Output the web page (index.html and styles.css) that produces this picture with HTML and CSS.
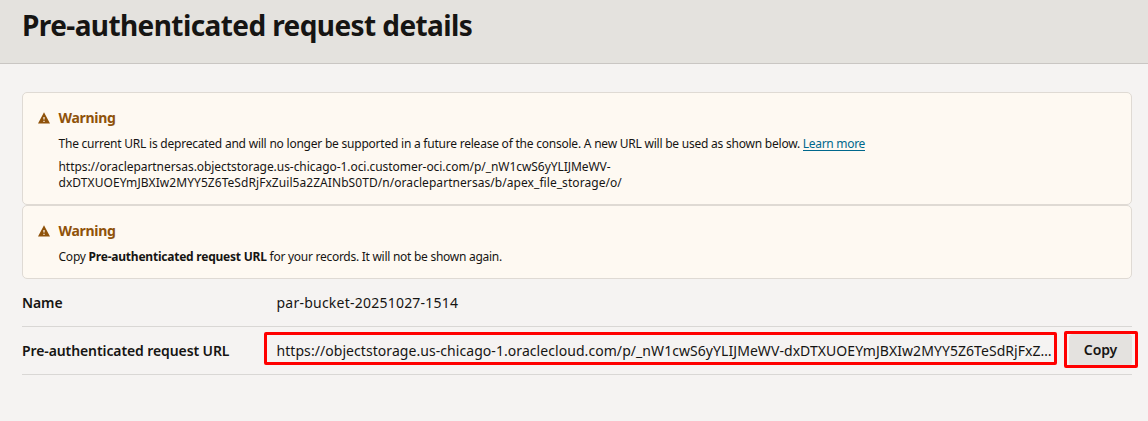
FILE: index.html
```html
<!DOCTYPE html>
<html lang="en">
<head>
<meta charset="utf-8">
<title>Pre-authenticated request details</title>
<link rel="stylesheet" href="styles.css">
</head>
<body>
<header class="header"><h1 class="title">Pre-authenticated request details</h1></header>
<main class="content">
  <section class="alert alert-url">
    <svg class="alert-icon" viewBox="0 0 12 12"><path fill="#8f520a" fill-rule="evenodd" d="M6 .3 12 11.6H0ZM5.4 5v2.6h1.2V5ZM5.4 8.8v1.2h1.2V8.8Z"/></svg>
    <div class="alert-body">
      <h2 class="alert-title">Warning</h2>
      <p class="text">The current URL is deprecated and will no longer be supported in a future release of the console. A new URL will be used as shown below. <a class="link" href="#">Learn more</a></p>
      <p class="text url"><span class="url-host">https://oraclepartnersas.objectstorage.us-chicago-1.oci.customer-oci.com/p/_nW1cwS6yYLIJMeWV-</span><br><span class="url-path">dxDTXUOEYmJBXIw2MYY5Z6TeSdRjFxZuil5a2ZAINbS0TD/n/oraclepartnersas/b/apex_file_storage/o/</span></p>
    </div>
  </section>
  <section class="alert alert-copy">
    <svg class="alert-icon" viewBox="0 0 12 12"><path fill="#8f520a" fill-rule="evenodd" d="M6 .3 12 11.6H0ZM5.4 5v2.6h1.2V5ZM5.4 8.8v1.2h1.2V8.8Z"/></svg>
    <div class="alert-body">
      <h2 class="alert-title">Warning</h2>
      <p class="text">Copy <b>Pre-authenticated request URL</b><span class="note"> for your records. It will not be shown again.</span></p>
    </div>
  </section>
  <dl class="details">
    <div class="row"><dt>Name</dt><dd class="name">par-bucket-20251027-1514</dd></div>
    <div class="row"><dt>Pre-authenticated request URL</dt><dd class="value marked">https://objectstorage.us-chicago-1.oraclecloud.com/p/_nW1cwS6yYLIJMeWV-dxDTXUOEYmJBXIw2MYY5Z6TeSdRjFxZ…</dd><dd class="action marked"><button class="copy">Copy</button></dd></div>
  </dl>
</main>
</body>
</html>
```
FILE: styles.css
```css
* { box-sizing: border-box; }
body { margin: 0; background: #f5f3f2; color: #161513; font-family: "Noto Sans", sans-serif; }
h1, h2, p, dl, dd { margin: 0; }
.header { height: 64px; background: #e4e2de; border-bottom: 1px solid #c9c6c3; padding: 5px 22px 0; }
.title { font-size: 28px; line-height: 40px; font-weight: 700; white-space: nowrap; letter-spacing: -0.59px; }
.content { padding: 28px 16px 0 22px; }
.alert { display: flex; background: #fef9f2; border: 1px solid #dfdad4; border-radius: 5px; padding: 15px; }
.alert-url { height: 113px; }
.alert-copy { height: 74px; }
.alert-icon { width: 12px; height: 12px; flex: none; margin: 4px 8.5px 0 0; }
.alert-title { font-size: 14px; line-height: 20px; font-weight: 700; color: #8f520a; letter-spacing: -0.3px; }
.text { font-size: 12px; line-height: 16px; margin-top: 8px; white-space: nowrap; letter-spacing: -0.225px; }
.url { margin-top: 7px; }
.url-host { letter-spacing: -0.055px; }
.url-path { letter-spacing: 0.06px; }
.note { letter-spacing: -0.27px; }
.link { display: inline-block; height: 15px; line-height: 16px; color: #00688c; text-decoration: none; border-bottom: 1px solid; vertical-align: top; letter-spacing: -0.3px; }
.details { font-size: 14px; line-height: 20px; }
.row { display: flex; align-items: center; height: 48px; border-bottom: 1px solid #d9d7d5; white-space: nowrap; }
dt { width: 254.5px; font-weight: 600; flex: none; letter-spacing: -0.1px; }
.name { letter-spacing: 0.23px; }
.value { width: 776.5px; flex: none; letter-spacing: 0.06px; }
.action { margin-left: auto; }
.marked { position: relative; }
.marked::after { content: ""; position: absolute; border: 3px solid #f00; border-radius: 2px; }
.value.marked::after { inset: -8.5px -4px -4.5px -12.5px; }
.action.marked::after { inset: -3px -6px -1px -5px; }
.copy { display: block; width: 63px; height: 32px; margin-bottom: 1px; border: 0; border-radius: 4px; background: #e4e2df; color: #161513; font: 600 14px/20px "Noto Sans", sans-serif; letter-spacing: -0.1px; padding: 0; }
```
